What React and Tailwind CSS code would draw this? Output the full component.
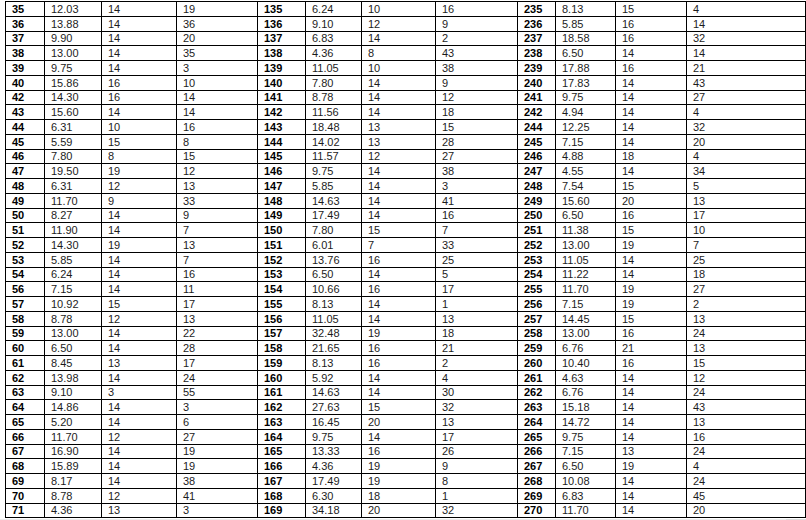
const g1 = [
  ['35', '12.03', '14', '19'], ['36', '13.88', '14', '36'], ['37', '9.90', '14', '20'], ['38', '13.00', '14', '35'],
  ['39', '9.75', '14', '3'], ['40', '15.86', '16', '10'], ['42', '14.30', '16', '14'], ['43', '15.60', '14', '14'],
  ['44', '6.31', '10', '16'], ['45', '5.59', '15', '8'], ['46', '7.80', '8', '15'], ['47', '19.50', '19', '12'],
  ['48', '6.31', '12', '13'], ['49', '11.70', '9', '33'], ['50', '8.27', '14', '9'], ['51', '11.90', '14', '7'],
  ['52', '14.30', '19', '13'], ['53', '5.85', '14', '7'], ['54', '6.24', '14', '16'], ['56', '7.15', '14', '11'],
  ['57', '10.92', '15', '17'], ['58', '8.78', '12', '13'], ['59', '13.00', '14', '22'], ['60', '6.50', '14', '28'],
  ['61', '8.45', '13', '17'], ['62', '13.98', '14', '24'], ['63', '9.10', '3', '55'], ['64', '14.86', '14', '3'],
  ['65', '5.20', '14', '6'], ['66', '11.70', '12', '27'], ['67', '16.90', '14', '19'], ['68', '15.89', '14', '19'],
  ['69', '8.17', '14', '38'], ['70', '8.78', '12', '41'], ['71', '4.36', '13', '3'],
]

const g2 = [
  ['135', '6.24', '10', '16'], ['136', '9.10', '12', '9'], ['137', '6.83', '14', '2'], ['138', '4.36', '8', '43'],
  ['139', '11.05', '10', '38'], ['140', '7.80', '14', '9'], ['141', '8.78', '14', '12'], ['142', '11.56', '14', '18'],
  ['143', '18.48', '13', '15'], ['144', '14.02', '13', '28'], ['145', '11.57', '12', '27'], ['146', '9.75', '14', '38'],
  ['147', '5.85', '14', '3'], ['148', '14.63', '14', '41'], ['149', '17.49', '14', '16'], ['150', '7.80', '15', '7'],
  ['151', '6.01', '7', '33'], ['152', '13.76', '16', '25'], ['153', '6.50', '14', '5'], ['154', '10.66', '16', '17'],
  ['155', '8.13', '14', '1'], ['156', '11.05', '14', '13'], ['157', '32.48', '19', '18'], ['158', '21.65', '16', '21'],
  ['159', '8.13', '16', '2'], ['160', '5.92', '14', '4'], ['161', '14.63', '14', '30'], ['162', '27.63', '15', '32'],
  ['163', '16.45', '20', '13'], ['164', '9.75', '14', '17'], ['165', '13.33', '16', '26'], ['166', '4.36', '19', '9'],
  ['167', '17.49', '19', '8'], ['168', '6.30', '18', '1'], ['169', '34.18', '20', '32'],
]

const g3 = [
  ['235', '8.13', '15', '4'], ['236', '5.85', '16', '14'], ['237', '18.58', '16', '32'], ['238', '6.50', '14', '14'],
  ['239', '17.88', '16', '21'], ['240', '17.83', '14', '43'], ['241', '9.75', '14', '27'], ['242', '4.94', '14', '4'],
  ['244', '12.25', '14', '32'], ['245', '7.15', '14', '20'], ['246', '4.88', '18', '4'], ['247', '4.55', '14', '34'],
  ['248', '7.54', '15', '5'], ['249', '15.60', '20', '13'], ['250', '6.50', '16', '17'], ['251', '11.38', '15', '10'],
  ['252', '13.00', '19', '7'], ['253', '11.05', '14', '25'], ['254', '11.22', '14', '18'], ['255', '11.70', '19', '27'],
  ['256', '7.15', '19', '2'], ['257', '14.45', '15', '13'], ['258', '13.00', '16', '24'], ['259', '6.76', '21', '13'],
  ['260', '10.40', '16', '15'], ['261', '4.63', '14', '12'], ['262', '6.76', '14', '24'], ['263', '15.18', '14', '43'],
  ['264', '14.72', '14', '13'], ['265', '9.75', '14', '16'], ['266', '7.15', '13', '24'], ['267', '6.50', '19', '4'],
  ['268', '10.08', '14', '24'], ['269', '6.83', '14', '45'], ['270', '11.70', '14', '20'],
]

const widths = [39, 57, 75, 81, 48, 56, 74, 82, 38, 60, 71, 119]

function Cell({ children, bold }) {
  return (
    <td className={`h-[14.76px] border border-black px-[6px] py-0 align-middle leading-[12px] whitespace-nowrap ${bold ? 'font-bold text-black' : 'text-[#1c1c1c]'}`}>
      {children}
    </td>
  )
}

export default function App() {
  return (
    <div className="h-[520px] w-[806px] overflow-hidden bg-white font-['Liberation_Sans',Arial,sans-serif] text-[11px]">
      <div className="pl-[5px] pt-[1px]">
        <table className="w-[801px] table-fixed border-collapse">
          <colgroup>
            {widths.map((w, i) => (
              <col key={i} style={{ width: w }} />
            ))}
          </colgroup>
          <tbody>
            {g1.map((r, i) => (
              <tr key={r[0]}>
                {[r, g2[i], g3[i]].map((grp) =>
                  grp.map((v, j) => (
                    <Cell key={grp[0] + j} bold={j === 0}>{v}</Cell>
                  ))
                )}
              </tr>
            ))}
          </tbody>
        </table>
      </div>
      <div className="mt-[1px] flex h-[4px]">
        <div className="flex-1 bg-[#ececec]" />
        <div className="w-[20px] bg-[#dcdcdc]" />
      </div>
    </div>
  )
}
